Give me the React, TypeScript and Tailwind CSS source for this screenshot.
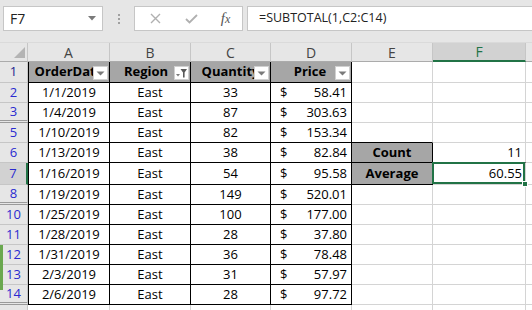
import React from "react";

type Row = { n: number; d: string; q: string; p: string };

const rows: Row[] = [
  { n: 2, d: "1/1/2019", q: "33", p: "58.41" },
  { n: 3, d: "1/4/2019", q: "87", p: "303.63" },
  { n: 5, d: "1/10/2019", q: "82", p: "153.34" },
  { n: 6, d: "1/13/2019", q: "38", p: "82.84" },
  { n: 7, d: "1/16/2019", q: "54", p: "95.58" },
  { n: 8, d: "1/19/2019", q: "149", p: "520.01" },
  { n: 10, d: "1/25/2019", q: "100", p: "177.00" },
  { n: 11, d: "1/28/2019", q: "28", p: "37.80" },
  { n: 12, d: "1/31/2019", q: "36", p: "78.48" },
  { n: 13, d: "2/3/2019", q: "31", p: "57.97" },
  { n: 14, d: "2/6/2019", q: "28", p: "97.72" },
];

const hiddenAfter = [3, 8, 14];

function DropBtn({ filter }: { filter?: boolean }) {
  return (
    <div className="absolute right-[1px] bottom-[2px] w-[15px] h-[14px] bg-white border border-[#d0d0d0] flex items-center justify-center">
      {filter ? (
        <svg width="13" height="12" viewBox="0 0 13 12">
          <path d="M1 7 L5 7 L3 9.5 Z" fill="#7a7a7a" />
          <path d="M5.5 2 L12 2 L9.6 5.5 L9.6 10.5 L8 10.5 L8 5.5 Z" fill="#5a5a5a" />
        </svg>
      ) : (
        <svg width="9" height="5" viewBox="0 0 9 5">
          <path d="M0.5 0.5 L8.5 0.5 L4.5 4.5 Z" fill="#7a7a7a" />
        </svg>
      )}
    </div>
  );
}

export default function App() {
  return (
    <div className="relative w-[532px] h-[310px] overflow-hidden bg-white font-['Open_Sans',sans-serif] text-[13px] text-black">
      {/* Toolbar */}
      <div className="h-[42px] bg-[#e6e6e6] flex items-start pt-[6px] pl-[3px]">
        <div className="w-[100px] h-[25px] bg-white border border-[#c6c6c6] flex items-center pl-[6px] pr-[6px]">
          <span className="text-[14px] text-[#222] flex-1">F7</span>
          <svg width="8" height="5" viewBox="0 0 8 5">
            <path d="M0 0 L8 0 L4 4.5 Z" fill="#7a7a7a" />
          </svg>
        </div>
        <div className="w-[31px] h-[25px] flex flex-col items-center justify-center gap-[2px]">
          <div className="w-[2px] h-[2px] bg-[#a0a0a0]" />
          <div className="w-[2px] h-[2px] bg-[#a0a0a0]" />
          <div className="w-[2px] h-[2px] bg-[#a0a0a0]" />
        </div>
        <div className="w-[109px] h-[25px] bg-white border border-[#c6c6c6] flex items-center">
          <div className="w-[38px] flex justify-center pl-[2px]">
            <svg width="11" height="11" viewBox="0 0 11 11">
              <path d="M1 1 L10 10 M10 1 L1 10" stroke="#b0b0b0" strokeWidth="1.4" />
            </svg>
          </div>
          <div className="w-[36px] flex justify-center">
            <svg width="13" height="10" viewBox="0 0 13 10">
              <path d="M1 5 L4.5 8.5 L12 1" stroke="#b0b0b0" strokeWidth="1.8" fill="none" />
            </svg>
          </div>
          <div className="flex-1 flex justify-center">
            <span className="font-['Liberation_Serif',serif] italic text-[15px] text-[#555] leading-none">
              f<span className="text-[12px]">x</span>
            </span>
          </div>
        </div>
        <div className="ml-[4px] flex-1 h-[25px] bg-white border border-[#c6c6c6] border-r-0 flex items-center pl-[11px]">
          <span className="text-[12.5px] text-[#222]">=SUBTOTAL(1,C2:C14)</span>
        </div>
      </div>

      {/* Column headers */}
      <div className="flex h-[20px] bg-[#e6e6e6] border-t border-[#dadada] text-[14px] text-[#444]">
        <div className="w-[28px] h-full border-r border-[#c6c6c6] border-b border-b-[#ababab] flex items-end justify-end pr-[2px] pb-[3px]">
          <svg width="11" height="11" viewBox="0 0 11 11">
            <path d="M11 0 L11 11 L0 11 Z" fill="#b4b4b4" />
          </svg>
        </div>
        <div className="w-[82px] h-full border-r border-[#c6c6c6] border-b border-b-[#ababab] flex items-center justify-center">A</div>
        <div className="w-[81px] h-full border-r border-[#c6c6c6] border-b border-b-[#ababab] flex items-center justify-center">B</div>
        <div className="w-[80px] h-full border-r border-[#c6c6c6] border-b border-b-[#ababab] flex items-center justify-center">C</div>
        <div className="w-[81px] h-full border-r border-[#c6c6c6] border-b border-b-[#ababab] flex items-center justify-center">D</div>
        <div className="w-[81px] h-full border-r border-[#c6c6c6] border-b border-b-[#ababab] flex items-center justify-center">E</div>
        <div className="w-[93px] h-full bg-[#d2d2d2] border-r border-[#c6c6c6] border-b-2 border-b-[#217346] flex items-center justify-center text-[#217346]">F</div>
        <div className="flex-1 h-full border-b border-b-[#ababab]" />
      </div>

      {/* Row 1 - table headers */}
      <div className="flex h-[21px]">
        <div className="w-[28px] h-full bg-[#e6e6e6] border-r border-[#c6c6c6] border-b border-b-[#c6c6c6] flex items-center justify-center text-[13px] text-[#1f1f8f]">1</div>
        <div className="relative w-[82px] h-full bg-[#a6a6a6] border-l border-r border-b border-black flex items-center justify-center font-bold overflow-hidden whitespace-nowrap">
          OrderDate
          <DropBtn />
        </div>
        <div className="relative w-[81px] h-full bg-[#a6a6a6] border-r border-b border-black flex items-center justify-center font-bold overflow-hidden whitespace-nowrap pr-[8px]">
          Region
          <DropBtn filter />
        </div>
        <div className="relative w-[80px] h-full bg-[#a6a6a6] border-r border-b border-black flex items-center justify-center font-bold overflow-hidden whitespace-nowrap">
          Quantity
          <DropBtn />
        </div>
        <div className="relative w-[81px] h-full bg-[#a6a6a6] border-r border-b border-black flex items-center justify-center font-bold overflow-hidden whitespace-nowrap pr-[2px]">
          Price
          <DropBtn />
        </div>
        <div className="w-[81px] h-full border-r border-b border-[#d4d4d4]" />
        <div className="w-[93px] h-full border-r border-b border-[#d4d4d4]" />
        <div className="flex-1 h-full border-b border-[#d4d4d4]" />
      </div>

      {rows.map((r) => {
        const h = r.n === 7 ? "h-[22px]" : "h-[20px]";
        const hidden = hiddenAfter.includes(r.n);
        const sel = r.n === 7;
        return (
          <div key={r.n} className={`flex ${h}`}>
            <div
              className={
                "w-[28px] h-full flex items-center justify-center text-[13px] text-[#2a2ad0] " +
                (sel ? "bg-[#d2d2d2] border-r-2 border-r-[#217346] " : "bg-[#e6e6e6] border-r border-r-[#c6c6c6] ") +
                (hidden ? "border-b-[3px] border-double border-b-[#9a9a9a]" : "border-b border-b-[#c6c6c6]")
              }
            >
              {r.n}
            </div>
            <div className="w-[82px] h-full border-l border-r border-b border-black flex items-center justify-center whitespace-nowrap">{r.d}</div>
            <div className="w-[81px] h-full border-r border-b border-black flex items-center justify-center">East</div>
            <div className="w-[80px] h-full border-r border-b border-black flex items-center justify-center">{r.q}</div>
            <div className="w-[81px] h-full border-r border-b border-black flex items-center pl-[9px] pr-[4px]">
              <span>$</span>
              <span className="flex-1 text-right">{r.p}</span>
            </div>
            {r.n === 6 || r.n === 7 ? (
              <div className="w-[81px] h-full bg-[#a6a6a6] border-r border-b border-black flex items-center justify-center font-bold">
                {r.n === 6 ? "Count" : "Average"}
              </div>
            ) : (
              <div className={`w-[81px] h-full border-r border-b ${r.n === 5 ? "border-b-black border-r-[#d4d4d4]" : "border-[#d4d4d4]"}`} />
            )}
            {r.n === 6 ? (
              <div className="w-[93px] h-full border-r border-b border-[#d4d4d4] border-b-black flex items-center justify-end pr-[3px]">11</div>
            ) : r.n === 7 ? (
              <div className="relative w-[93px] h-full border-r border-b border-[#d4d4d4] flex items-center justify-end pr-[3px]">
                60.55
                <div className="absolute -left-[1px] -top-[1px] right-0 bottom-0 border-2 border-[#217346]" />
                <div className="absolute -right-[3px] -bottom-[3px] w-[6px] h-[6px] bg-[#217346] border border-white" />
              </div>
            ) : (
              <div className="w-[93px] h-full border-r border-b border-[#d4d4d4]" />
            )}
            <div className="flex-1 h-full border-b border-[#d4d4d4]" />
          </div>
        );
      })}

      {/* partial row 16 */}
      <div className="flex h-[10px]">
        <div className="w-[28px] h-full bg-[#e6e6e6] border-r border-[#c6c6c6]" />
        <div className="w-[82px] h-full border-r border-[#d4d4d4]" />
        <div className="w-[81px] h-full border-r border-[#d4d4d4]" />
        <div className="w-[80px] h-full border-r border-[#d4d4d4]" />
        <div className="w-[81px] h-full border-r border-[#d4d4d4]" />
        <div className="w-[81px] h-full border-r border-[#d4d4d4]" />
        <div className="w-[93px] h-full border-r border-[#d4d4d4]" />
      </div>

      <div className="absolute left-0 top-[245px] w-[3px] h-[45px] bg-[#6aa84f]" />
    </div>
  );
}
